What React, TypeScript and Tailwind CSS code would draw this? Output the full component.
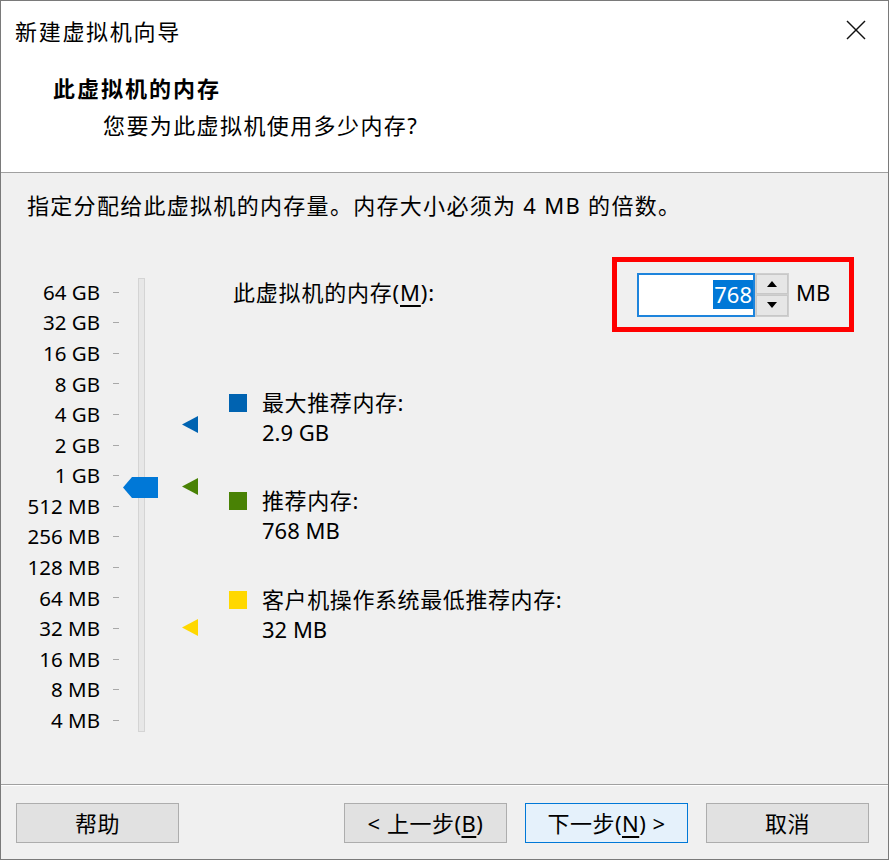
import React from "react";

const labels = [
  "64 GB", "32 GB", "16 GB", "8 GB", "4 GB", "2 GB", "1 GB",
  "512 MB", "256 MB", "128 MB", "64 MB", "32 MB", "16 MB", "8 MB", "4 MB",
];

function Tri({ color }: { color: string }) {
  return (
    <svg width="16" height="17" viewBox="0 0 16 17">
      <polygon points="16,0 16,17 0,8.5" fill={color} />
    </svg>
  );
}

function Legend({ color, title, value }: { color: string; title: string; value: string }) {
  return (
    <div className="flex">
      <div className="w-[18px] h-[18px] mt-[7px]" style={{ backgroundColor: color }} />
      <div className="ml-[15px] leading-[30px]">
        <div className="tracking-[0.6px]">{title}</div>
        <div>{value}</div>
      </div>
    </div>
  );
}

function Btn({ children, primary }: { children: React.ReactNode; primary?: boolean }) {
  return (
    <div
      className={
        "w-[163px] h-[40px] flex items-center justify-center border tracking-[0.5px] " +
        (primary ? "bg-[#e5f1fb] border-[#0078d7]" : "bg-[#e1e1e1] border-[#adadad]")
      }
    >
      {children}
    </div>
  );
}

export default function App() {
  return (
    <div className="w-[890px] h-[861px] bg-white font-['Noto_Sans','Noto_Sans_CJK_SC',sans-serif] text-[22px] text-black">
      <div className="w-[889px] h-[860px] border border-[#7a7a7a] bg-[#f0f0f0] flex flex-col">
        {/* Header */}
        <div className="h-[172px] bg-white border-b border-[#a0a0a0] flex flex-col">
          <div className="flex items-start pt-[15px] pl-[14px] pr-[22px]">
            <div className="leading-[30px] tracking-[1.7px]">新建虚拟机向导</div>
            <svg className="ml-auto mt-[4px]" width="20" height="20" viewBox="0 0 20 20">
              <line x1="1" y1="1" x2="19" y2="19" stroke="#111" strokeWidth="1.4" />
              <line x1="19" y1="1" x2="1" y2="19" stroke="#111" strokeWidth="1.4" />
            </svg>
          </div>
          <div className="mt-[27px] pl-[52px] leading-[30px] font-bold tracking-[2px]">此虚拟机的内存</div>
          <div className="mt-[7px] pl-[102px] leading-[30px] tracking-[1.4px]">您要为此虚拟机使用多少内存?</div>
        </div>

        {/* Body */}
        <div className="h-[611px] flex flex-col">
          <div className="pt-[17px] pl-[26px] leading-[30px] tracking-[1.3px]">
            指定分配给此虚拟机的内存量。内存大小必须为 4 MB 的倍数。
          </div>

          <div className="mt-[37px] flex">
            {/* Scale labels */}
            <div className="w-[118px] pt-[20px] flex flex-col">
              {labels.map((l) => (
                <div key={l} className="h-[30.57px] flex items-center justify-end">
                  <span className="text-[20.5px]">{l}</span>
                  <span className="ml-[13px] w-[6px] h-px bg-[#a8a8a8]" />
                </div>
              ))}
            </div>

            {/* Track */}
            <div className="ml-[19px] mt-[21px] w-[7px] h-[454px] relative bg-[#e7e7e7] border border-[#d4d4d4]">
              <svg className="absolute left-[-16px] top-[198px]" width="35" height="21" viewBox="0 0 35 21">
                <polygon points="0,10.5 9,0 35,0 35,21 9,21" fill="#0078d7" />
              </svg>
            </div>

            {/* Markers */}
            <div className="w-[84px] relative">
              <div className="absolute left-[37px] top-[159px]">
                <Tri color="#0063b1" />
              </div>
              <div className="absolute left-[37px] top-[221px]">
                <Tri color="#498205" />
              </div>
              <div className="absolute left-[37px] top-[362px]">
                <Tri color="#ffd800" />
              </div>
            </div>

            {/* Right content */}
            <div className="flex-1 flex flex-col">
              <div className="h-[75px] flex items-center">
                <div className="ml-[4px] mb-[5px] tracking-[0.8px]">
                  此虚拟机的内存(<span className="underline underline-offset-4">M</span>):
                </div>
                <div className="ml-auto mr-[34px] w-[242px] h-[75px] border-[5px] border-[#ff0000] flex items-center pl-[20px]">
                  <div className="w-[118px] h-[44px] border-2 border-[#1e84dc] bg-white flex items-center justify-end">
                    <span className="bg-[#0078d7] text-white leading-[29px] px-[1px]">768</span>
                  </div>
                  <div className="w-[34px] h-[44px] bg-[#cfcfcf] p-px flex flex-col gap-px">
                    <div className="flex-1 bg-[#e6e6e6] border border-[#c8c8c8] flex items-center justify-center">
                      <svg width="10" height="6" viewBox="0 0 10 6">
                        <polygon points="5,0 10,6 0,6" fill="#000" />
                      </svg>
                    </div>
                    <div className="flex-1 bg-[#e6e6e6] border border-[#c8c8c8] flex items-center justify-center">
                      <svg width="10" height="6" viewBox="0 0 10 6">
                        <polygon points="0,0 10,0 5,6" fill="#000" />
                      </svg>
                    </div>
                  </div>
                  <div className="ml-[7px] mb-[4px]">MB</div>
                </div>
              </div>

              <div className="mt-[55px]">
                <Legend color="#0063b1" title="最大推荐内存:" value="2.9 GB" />
              </div>
              <div className="mt-[38px]">
                <Legend color="#498205" title="推荐内存:" value="768 MB" />
              </div>
              <div className="mt-[39px]">
                <Legend color="#ffd800" title="客户机操作系统最低推荐内存:" value="32 MB" />
              </div>
            </div>
          </div>
        </div>

        {/* Footer */}
        <div className="flex-1 border-t border-[#a0a0a0]">
          <div className="h-full border-t border-white flex items-start pt-[17px] pl-[15px] pr-[19px]">
            <Btn>帮助</Btn>
            <div className="ml-auto flex gap-[18px]">
              <Btn>
                &lt; 上一步(<span className="underline underline-offset-4">B</span>)
              </Btn>
              <Btn primary>
                下一步(<span className="underline underline-offset-4">N</span>) &gt;
              </Btn>
              <Btn>取消</Btn>
            </div>
          </div>
        </div>
      </div>
    </div>
  );
}
